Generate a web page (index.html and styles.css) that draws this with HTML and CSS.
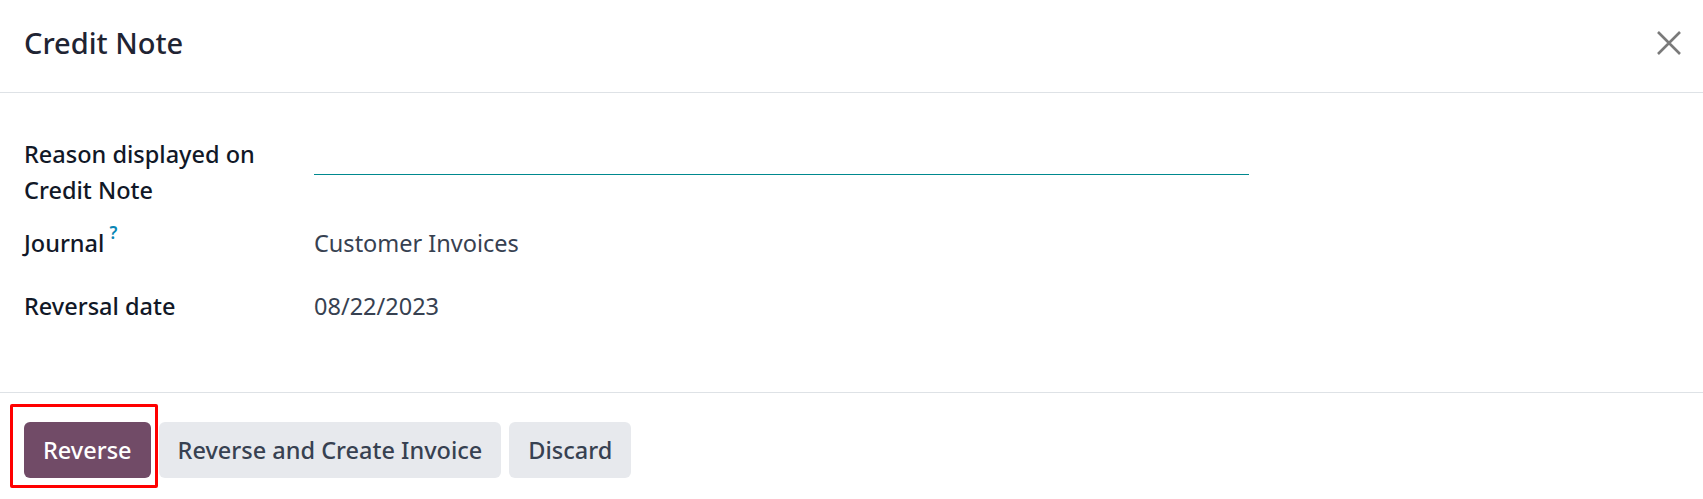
FILE: index.html
```html
<!DOCTYPE html>
<html lang="en">
<head>
    <meta charset="UTF-8">
    <meta name="viewport" content="width=device-width, initial-scale=1.0">
    <title>Credit Note</title>
    <link rel="stylesheet" href="styles.css">
</head>
<body>
    <div class="modal">
        <header class="modal-header">
            <h4 class="modal-title">Credit Note</h4>
            <button class="btn-close" type="button" aria-label="Close">
                <svg width="24" height="24" viewBox="0 0 24 24">
                    <path d="M1 1 L23 23 M23 1 L1 23" stroke="#7a7a7a" stroke-width="2.6" fill="none"/>
                </svg>
            </button>
        </header>

        <main class="modal-body">
            <div class="form-row row-reason">
                <label class="field-label">Reason displayed on<br>Credit Note</label>
                <div class="field-value">
                    <input class="field-input" type="text">
                </div>
            </div>
            <div class="form-row row-journal">
                <label class="field-label">Journal<sup class="help">?</sup></label>
                <div class="field-value">Customer Invoices</div>
            </div>
            <div class="form-row row-date">
                <label class="field-label">Reversal date</label>
                <div class="field-value">08/22/2023</div>
            </div>
        </main>

        <footer class="modal-footer">
            <span class="highlight">
                <button class="btn btn-primary" type="button">Reverse</button>
            </span>
            <button class="btn btn-secondary" type="button">Reverse and Create Invoice</button>
            <button class="btn btn-secondary" type="button">Discard</button>
        </footer>
    </div>
</body>
</html>
```

FILE: styles.css
```css
body {
    margin: 0;
    background: #fff;
    font-family: "Noto Sans", "Open Sans", sans-serif;
    color: #111827;
}

.modal {
    width: 1703px;
    height: 499px;
    overflow: hidden;
}

.modal-header {
    display: flex;
    align-items: center;
    justify-content: space-between;
    height: 92px;
    padding: 0 22px 0 24px;
    border-bottom: 1px solid #dee2e6;
}

.modal-title {
    margin: 0 0 8px;
    font-size: 29px;
    font-weight: 500;
    color: #1f2433;
}

.btn-close {
    border: 0;
    background: none;
    padding: 0;
    width: 24px;
    height: 24px;
    margin-bottom: 6px;
}

.modal-body {
    height: 300px;
    padding: 0 24px;
    box-sizing: border-box;
    border-bottom: 1px solid #dee2e6;
}

.form-row {
    display: grid;
    grid-template-columns: 290px 935px;
    font-size: 23.5px;
    line-height: 36px;
}

.row-reason {
    padding-top: 43px;
}

.row-journal {
    padding-top: 17px;
}

.row-date {
    padding-top: 27px;
}

.field-label {
    font-weight: 500;
    color: #111827;
}

.help {
    font-size: 17px;
    font-weight: 600;
    color: #0a87b5;
    margin-left: 5px;
    vertical-align: 13px;
    line-height: 0;
}

.field-value {
    color: #374151;
}

.field-input {
    display: block;
    width: 100%;
    height: 39px;
    box-sizing: border-box;
    border: 0;
    border-bottom: 1.5px solid #00898f;
    outline: none;
    padding: 0;
}

.modal-footer {
    display: flex;
    gap: 8px;
    padding: 29px 24px 0;
}

.highlight {
    position: relative;
    display: flex;
}

.highlight::after {
    content: "";
    position: absolute;
    top: -18px;
    left: -14px;
    right: -7px;
    bottom: -10px;
    border: 3px solid #ff0000;
    border-radius: 2px;
}

.btn {
    height: 56px;
    border: 0;
    border-radius: 6px;
    padding: 0 19px;
    font-family: inherit;
    font-size: 23.5px;
    font-weight: 500;
}

.btn-primary {
    background: #714b67;
    color: #fff;
}

.btn-secondary {
    background: #e7e9ed;
    color: #374151;
}
```
